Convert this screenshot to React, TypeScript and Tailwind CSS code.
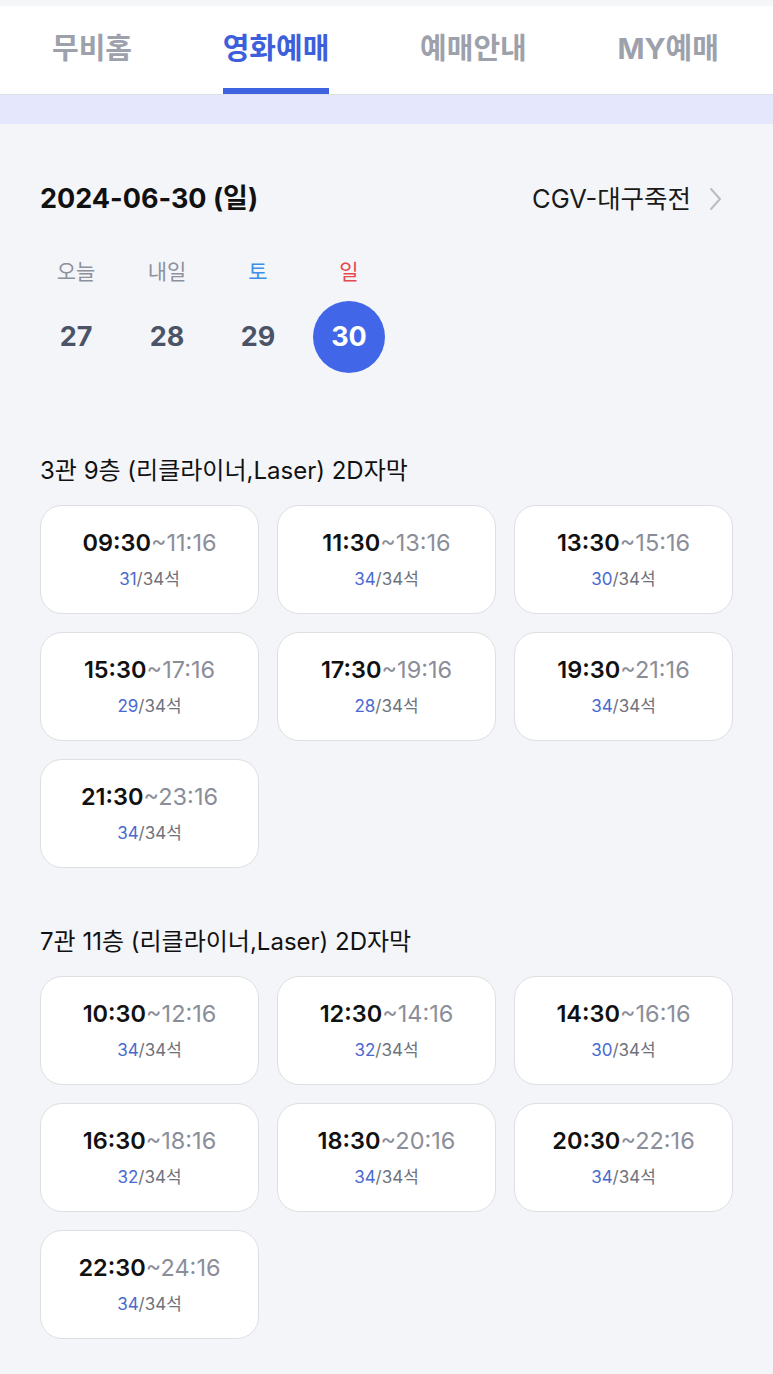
const font = { fontFamily: '"Inter", "Noto Sans CJK KR", sans-serif' };

const tabs = ["무비홈", "영화예매", "예매안내", "MY예매"];

const days = [
  { label: "오늘", num: "27", tone: "text-[#8d919c]" },
  { label: "내일", num: "28", tone: "text-[#8d919c]" },
  { label: "토", num: "29", tone: "text-[#3b8fe6]" },
  { label: "일", num: "30", tone: "text-[#e5484d]", active: true },
];

interface Show {
  start: string;
  end: string;
  left: number;
}

const halls: { title: string; shows: Show[] }[] = [
  {
    title: "3관 9층 (리클라이너,Laser) 2D자막",
    shows: [
      { start: "09:30", end: "11:16", left: 31 },
      { start: "11:30", end: "13:16", left: 34 },
      { start: "13:30", end: "15:16", left: 30 },
      { start: "15:30", end: "17:16", left: 29 },
      { start: "17:30", end: "19:16", left: 28 },
      { start: "19:30", end: "21:16", left: 34 },
      { start: "21:30", end: "23:16", left: 34 },
    ],
  },
  {
    title: "7관 11층 (리클라이너,Laser) 2D자막",
    shows: [
      { start: "10:30", end: "12:16", left: 34 },
      { start: "12:30", end: "14:16", left: 32 },
      { start: "14:30", end: "16:16", left: 30 },
      { start: "16:30", end: "18:16", left: 32 },
      { start: "18:30", end: "20:16", left: 34 },
      { start: "20:30", end: "22:16", left: 34 },
      { start: "22:30", end: "24:16", left: 34 },
    ],
  },
];

function ShowCard({ show }: { show: Show }) {
  return (
    <button className="flex h-[109px] flex-col items-center justify-center rounded-[22px] border border-[#dedfe3] bg-white">
      <div className="text-[23.5px] leading-none">
        <span className="font-semibold text-[#111111]">{show.start}</span>
        <span className="text-[#8b8e99]">~{show.end}</span>
      </div>
      <div className="mt-[17px] text-[17px] leading-none">
        <span className="text-[#4a69d0]">{show.left}</span>
        <span className="text-[#6e727c]">/34석</span>
      </div>
    </button>
  );
}

export default function App() {
  return (
    <div style={font} className="min-h-[1374px] w-[773px] bg-[#f4f5f9]">
      <div className="h-[6px] bg-[#f5f6f8]" />
      <nav className="flex h-[89px] justify-between border-b border-[#dcdfe8] bg-white pl-[52px] pr-[54px]">
        {tabs.map((tab, i) => (
          <div key={tab} className="relative flex items-center pb-[4px]">
            <span className={`text-[29px] font-bold leading-none ${i === 1 ? "text-[#3d5fdc]" : "text-[#9da1ab]"}`}>{tab}</span>
            {i === 1 && <span className="absolute inset-x-0 bottom-0 h-[6px] bg-[#3d63e0]" />}
          </div>
        ))}
      </nav>
      <div className="h-[29px] bg-[#e5e8fc]" />

      <main className="px-10 pt-[61px] pb-10">
        <div className="flex items-center justify-between">
          <h1 className="text-[27px] font-bold leading-none text-[#111111]">2024-06-30 (일)</h1>
          <div className="mr-[11px] flex items-center gap-[18px] text-[25.5px] leading-none text-[#1a1a1a]">
            CGV-대구죽전
            <svg width="13" height="24" viewBox="0 0 13 24" fill="none" stroke="#b9bcc3" strokeWidth="2" strokeLinecap="round" strokeLinejoin="round">
              <path d="M2 2l9 10-9 10" />
            </svg>
          </div>
        </div>

        <div className="mt-[49px] flex gap-[19px]">
          {days.map((d) => (
            <div key={d.num} className="flex w-[72px] flex-col items-center">
              <span className={`text-[21px] leading-none ${d.tone}`}>{d.label}</span>
              <span
                className={`mt-[19px] flex h-[72px] w-[72px] items-center justify-center rounded-full text-[27px] font-bold ${
                  d.active ? "bg-[#4166e8] text-white" : "text-[#4b5466]"
                }`}
              >
                {d.num}
              </span>
            </div>
          ))}
        </div>

        {halls.map((hall, i) => (
          <section key={hall.title} className={i === 0 ? "mt-[86px]" : "mt-[62px]"}>
            <h2 className="text-[24px] leading-none text-[#111111]">{hall.title}</h2>
            <div className="mt-[22px] grid grid-cols-3 gap-x-[18px] gap-y-[18px]">
              {hall.shows.map((s) => (
                <ShowCard key={s.start} show={s} />
              ))}
            </div>
          </section>
        ))}
      </main>
    </div>
  );
}
